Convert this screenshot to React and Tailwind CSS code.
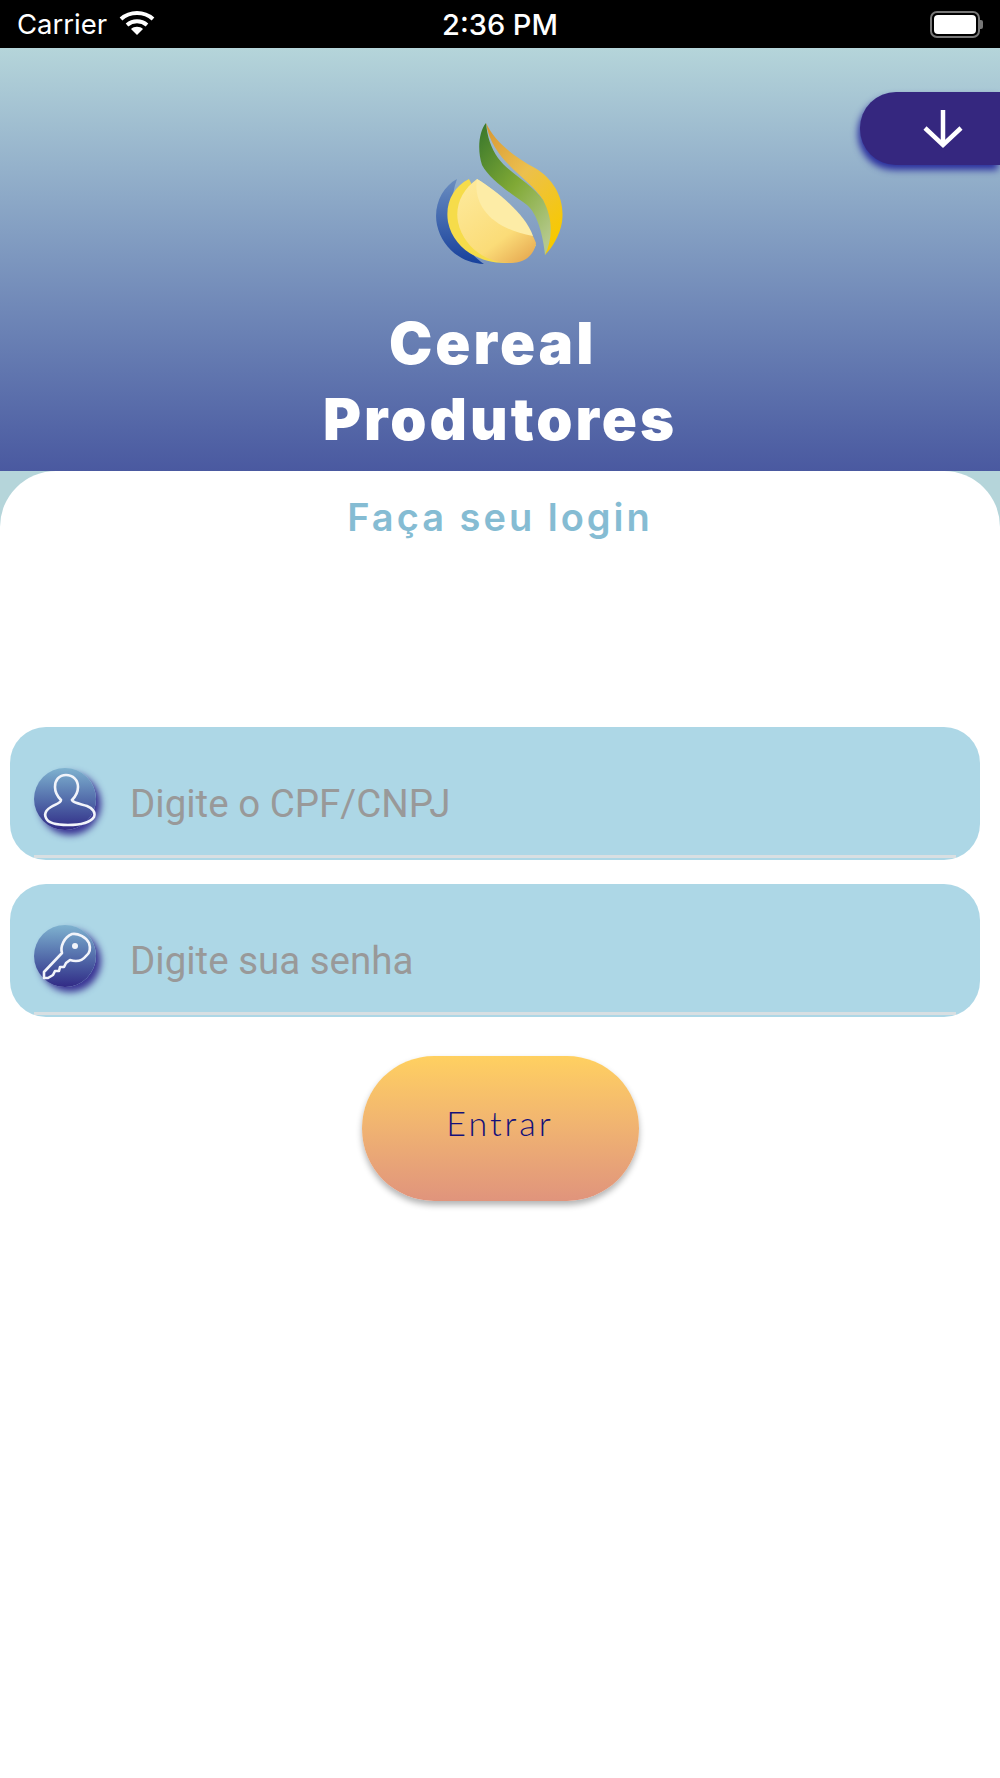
import { useState } from "react";

function Logo() {
  return (
    <svg viewBox="0 0 200 190" className="w-[200px] h-[190px]">
      <defs>
        <linearGradient id="leafOuter" x1="0.1" y1="0" x2="0.7" y2="1">
          <stop offset="0" stopColor="#d99a35" />
          <stop offset="0.45" stopColor="#ecc04e" />
          <stop offset="1" stopColor="#f7c900" />
        </linearGradient>
        <linearGradient id="leafInner" x1="0.1" y1="0" x2="0.8" y2="1">
          <stop offset="0" stopColor="#3d7a2c" />
          <stop offset="0.5" stopColor="#80a935" />
          <stop offset="1" stopColor="#b5c98c" />
        </linearGradient>
        <linearGradient id="grain" x1="0.2" y1="0" x2="0.9" y2="1">
          <stop offset="0" stopColor="#fde99a" />
          <stop offset="0.65" stopColor="#fbdc78" />
          <stop offset="1" stopColor="#e6a850" />
        </linearGradient>
        <linearGradient id="grainBack" x1="0" y1="0" x2="0" y2="1">
          <stop offset="0" stopColor="#6a8dc0" />
          <stop offset="1" stopColor="#17409c" />
        </linearGradient>
      </defs>
      <path d="M86 23C95 42 113 56 135 68C155 80 165 100 162 122C160 135 152 148 145 155C147 135 150 118 143 100C130 78 92 62 86 23Z" fill="url(#leafOuter)" />
      <path d="M86 23C79 31 77 50 82 65C90 80 113 95 127 105C137 113 143 135 145 155C152 140 154 120 143 100C132 84 108 72 98 58C91 48 87 36 86 23Z" fill="url(#leafInner)" />
      <path d="M57 79C42 87 33 106 37 125C42 147 60 163 84 164C66 152 42 120 57 79Z" fill="url(#grainBack)" />
      <path d="M69 79C53 87 45 103 48 122C53 147 77 163 106 163C118 163 130 158 136 145C115 130 85 115 69 79Z" fill="#f6dc4a" />
      <path d="M77 79C62 90 55 105 58 122C63 146 85 163 110 163C124 163 134 156 136 143C125 115 95 90 77 79Z" fill="url(#grain)" />
      <path d="M77 79C73 102 88 128 133 136C125 113 95 90 77 79Z" fill="#fdeca6" />
    </svg>
  );
}

function PersonIcon() {
  return (
    <svg viewBox="0 0 62 62" className="w-[62px] h-[62px]" fill="none" stroke="#f2f4fa" strokeWidth="2.6">
      <path d="M32 7C25 7 21 12 21 19C21 25 24 29 27 32C27 35 22 36 17 39C12 42 10 46 12 50C14 55 22 57 34 57C46 57 56 55 60 49C62 44 58 40 53 38C47 36 39 35 38 32C41 29 44 25 44 19C44 12 39 7 32 7Z" />
    </svg>
  );
}

function KeyIcon() {
  return (
    <svg viewBox="0 0 62 62" className="w-[62px] h-[62px]" fill="none" stroke="#f2f4fa" strokeWidth="2.6" strokeLinejoin="round">
      <path d="M38 9C44 8 52 12 55 18C57 24 56 28 52 31C48 36 42 37 36 35L32 38L30 42L26 42L25 46L21 46L19 50L14 53L10 53L10 47L28 28C26 22 30 12 38 9Z" />
      <circle cx="41" cy="21" r="3" fill="#f2f4fa" stroke="none" />
    </svg>
  );
}

function Field({ icon, placeholder, type }) {
  const [value, setValue] = useState("");

  return (
    <div className="h-[133px] rounded-[36px] bg-[#add7e6] px-6 flex flex-col justify-end pb-[2px]">
      <div className="flex items-start gap-[34px] h-[90px] border-b-[3px] border-[#d8dfe2]">
        <div className="w-[62px] h-[62px] shrink-0 rounded-full bg-gradient-to-b from-[#7fb2cf] to-[#322a86] shadow-[5px_5px_7px_#3a3494]">
          {icon}
        </div>
        <input
          type={type}
          value={value}
          onChange={(e) => setValue(e.target.value)}
          placeholder={placeholder}
          className="flex-1 h-[70px] bg-transparent outline-none text-[38.5px] font-['Roboto',sans-serif] text-[#333] placeholder:text-[#999]"
        />
      </div>
    </div>
  );
}

export default function App() {
  return (
    <div className="relative w-[1000px] h-[1778px] bg-white overflow-hidden flex flex-col">
      <div className="h-[48px] shrink-0 bg-black text-white grid grid-cols-3 items-center px-[17px] pt-[2px] font-['Inter',sans-serif]">
        <div className="flex items-center gap-3 text-[27.5px]">
          <span>Carrier</span>
          <svg viewBox="0 0 36 26" className="w-[36px] h-[26px] -mt-1" fill="none" stroke="white" strokeWidth="4">
            <path d="M2 9C11 1 25 1 34 9" />
            <path d="M8 15C14 10 22 10 28 15" />
            <path d="M18 25L12 19C15 16 21 16 24 19Z" fill="white" stroke="none" />
          </svg>
        </div>
        <div className="text-center text-[29px] font-medium">2:36 PM</div>
        <div className="flex justify-end items-center -mt-[2px]">
          <div className="w-[50px] h-[27px] rounded-[7px] border-2 border-[#777] p-[2px]">
            <div className="w-full h-full rounded-[4px] bg-white" />
          </div>
          <div className="w-[3px] h-[9px] rounded-r-[2px] bg-[#777]" />
        </div>
      </div>

      <div className="relative h-[423px] shrink-0 bg-gradient-to-b from-[#b5d5da] to-[#4a59a0] flex flex-col items-center">
        <div className="mt-[52px]">
          <Logo />
        </div>
        <h1 className="mt-[15px] text-center text-white font-['Inter',sans-serif] font-black text-[58px] leading-[76px] tracking-[3px] w-[420px]">
          Cereal{"\u00a0"}
          <br />
          Produtores
        </h1>
        <button className="absolute right-0 top-[44px] w-[140px] h-[73px] rounded-l-[36px] bg-[#35277f] shadow-[-2px_5px_7px_#2b2f9e] flex items-center pl-[63px]">
          <svg viewBox="0 0 40 40" className="w-[40px] h-[40px]" fill="none" stroke="white" strokeWidth="4.5">
            <path d="M20 1V36" />
            <path d="M2 19L20 36L38 19" />
          </svg>
        </button>
      </div>

      <div className="flex-1 bg-[#b5d5da]">
        <div className="h-full bg-white rounded-t-[56px] px-[10px] pt-[22px]">
          <h2 className="text-center font-['Inter',sans-serif] font-semibold text-[38px] leading-[48px] tracking-[3px] text-[#85bcd3]">
            Faça seu login
          </h2>
          <div className="mt-[186px] pr-[10px] flex flex-col gap-6">
            <Field icon={<PersonIcon />} placeholder="Digite o CPF/CNPJ" type="text" />
            <Field icon={<KeyIcon />} placeholder="Digite sua senha" type="password" />
          </div>
          <div className="mt-[39px] flex justify-center">
            <button className="w-[277px] h-[145px] rounded-[72px] bg-gradient-to-b from-[#ffd060] to-[#e0947c] shadow-[0_4px_6px_rgba(0,0,0,0.3)] text-[34px] tracking-[3px] text-[#14107a] font-['Lato',sans-serif] font-light pb-3">
              Entrar
            </button>
          </div>
        </div>
      </div>
    </div>
  );
}
